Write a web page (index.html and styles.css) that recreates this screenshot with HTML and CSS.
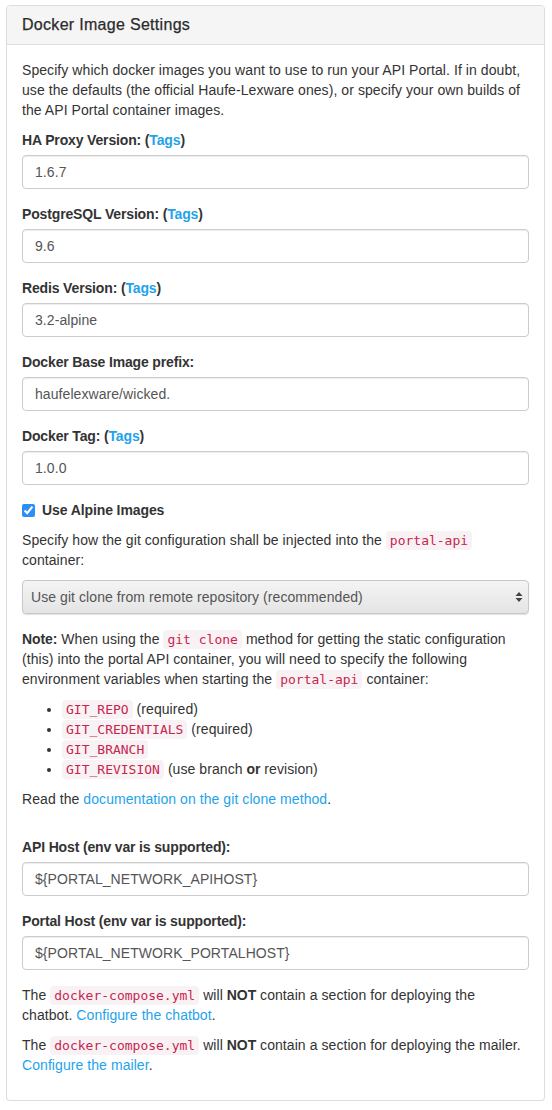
FILE: index.html
```html
<!DOCTYPE html>
<html>
<head>
<meta charset="utf-8">
<link rel="stylesheet" href="styles.css">
</head>
<body>
<div class="panel">
  <div class="panel-heading"><h3 class="panel-title">Docker Image Settings</h3></div>
  <div class="panel-body">
    <p>Specify which docker images you want to use to run your API Portal. If in doubt, use the defaults (the official Haufe-Lexware ones), or specify your own builds of the API Portal container images.</p>
    <div class="form-group">
      <label class="lbl">HA Proxy Version: (<a href="#">Tags</a>)</label>
      <input class="form-control" type="text" value="1.6.7">
    </div>
    <div class="form-group">
      <label class="lbl">PostgreSQL Version: (<a href="#">Tags</a>)</label>
      <input class="form-control" type="text" value="9.6">
    </div>
    <div class="form-group">
      <label class="lbl">Redis Version: (<a href="#">Tags</a>)</label>
      <input class="form-control" type="text" value="3.2-alpine">
    </div>
    <div class="form-group">
      <label class="lbl">Docker Base Image prefix:</label>
      <input class="form-control" type="text" value="haufelexware/wicked.">
    </div>
    <div class="form-group">
      <label class="lbl">Docker Tag: (<a href="#">Tags</a>)</label>
      <input class="form-control" type="text" value="1.0.0">
    </div>
    <div class="checkbox">
      <label class="check-label"><input type="checkbox" class="check" checked> Use Alpine Images</label>
    </div>
    <p>Specify how the git configuration shall be injected into the <code>portal-api</code> container:</p>
    <div class="form-group select-wrap">
      <select class="form-select">
        <option>Use git clone from remote repository (recommended)</option>
      </select>
      <svg class="select-arrows" width="8" height="12" viewBox="0 0 8 12"><path d="M4 1 L7.5 5 L0.5 5 Z M4 11 L7.5 7 L0.5 7 Z" fill="#444"/></svg>
    </div>
    <p><strong>Note:</strong> When using the <code>git clone</code> method for getting the static configuration (this) into the portal API container, you will need to specify the following environment variables when starting the <code>portal-api</code> container:</p>
    <ul>
      <li><code>GIT_REPO</code> (required)</li>
      <li><code>GIT_CREDENTIALS</code> (required)</li>
      <li><code>GIT_BRANCH</code></li>
      <li><code>GIT_REVISION</code> (use branch <strong>or</strong> revision)</li>
    </ul>
    <p>Read the <a href="#">documentation on the git clone method</a>.</p>
    <div class="form-group spaced">
      <label class="lbl">API Host (env var is supported):</label>
      <input class="form-control" type="text" value="${PORTAL_NETWORK_APIHOST}">
    </div>
    <div class="form-group">
      <label class="lbl">Portal Host (env var is supported):</label>
      <input class="form-control" type="text" value="${PORTAL_NETWORK_PORTALHOST}">
    </div>
    <p>The <code>docker-compose.yml</code> will <strong>NOT</strong> contain a section for deploying the chatbot. <a href="#">Configure the chatbot</a>.</p>
    <p class="last">The <code>docker-compose.yml</code> will <strong>NOT</strong> contain a section for deploying the mailer. <a href="#">Configure the mailer</a>.</p>
  </div>
</div>
</body>
</html>
```

FILE: styles.css
```css
* { box-sizing: border-box; }
html, body { background: #fff; }
body {
  margin: 5px 7px 0 6px;
  font-family: "Liberation Sans", Arial, sans-serif;
  font-size: 14px;
  line-height: 20px;
  color: #333;
  letter-spacing: 0.07px;
}
a { color: #1fa3eb; text-decoration: none; }
p { margin: 0 0 10px; }
strong { font-weight: bold; letter-spacing: -0.1px; }
.panel {
  border: 1px solid #ddd;
  border-radius: 4px;
  background: #fff;
  box-shadow: 0 1px 1px rgba(0,0,0,.05);
}
.panel-heading {
  background: #f5f5f5;
  border-bottom: 1px solid #ddd;
  border-radius: 3px 3px 0 0;
  padding: 10px 15px;
}
.panel-title {
  margin: 0;
  font-size: 16px;
  line-height: 17.6px;
  font-weight: normal;
  letter-spacing: 0.3px;
  color: #2b2b2b;
  -webkit-text-stroke: 0.25px #2b2b2b;
}
.panel-body { padding: 15px; }
.form-group { margin-bottom: 15px; }
.form-group.spaced { margin-top: 28px; }
.lbl {
  display: block;
  font-weight: bold;
  margin-bottom: 5px;
  letter-spacing: -0.15px;
}
.form-control {
  display: block;
  width: 100%;
  height: 34px;
  padding: 6px 12px;
  font-family: "Liberation Sans", Arial, sans-serif;
  font-size: 14px;
  line-height: 20px;
  letter-spacing: 0.07px;
  color: #555;
  background: #fff;
  border: 1px solid #ccc;
  border-radius: 4px;
  box-shadow: inset 0 1px 1px rgba(0,0,0,.075);
  outline: none;
}
.checkbox { margin: 10px 0; }
.check-label {
  display: block;
  padding-left: 20px;
  font-weight: bold;
  letter-spacing: -0.1px;
  position: relative;
}
.check {
  position: absolute;
  left: 0;
  top: 4px;
  margin: 0;
  width: 13px;
  height: 13px;
  accent-color: #2d8ef6;
}
.select-wrap { position: relative; }
.form-select {
  display: block;
  width: 100%;
  height: 34px;
  padding: 6px 30px 6px 8px;
  font-family: "Liberation Sans", Arial, sans-serif;
  font-size: 14px;
  letter-spacing: 0.07px;
  color: #555;
  -webkit-appearance: none;
  appearance: none;
  border: 1px solid #c8c8c8;
  border-radius: 4px;
  background: linear-gradient(#f4f4f4, #e4e4e4);
  box-shadow: 0 1px 1px rgba(0,0,0,.12);
  outline: none;
}
.select-arrows {
  position: absolute;
  right: 6px;
  top: 11px;
}
code {
  font-family: "DejaVu Sans Mono", Menlo, monospace;
  font-size: 13px;
  line-height: 1;
  letter-spacing: 0;
  color: #c7254e;
  background: #f9f2f4;
  padding: 2px 4px;
  border-radius: 4px;
}
ul {
  margin: 0 0 10px;
  padding-left: 40px;
}
.last { margin-bottom: 10px; }
```
